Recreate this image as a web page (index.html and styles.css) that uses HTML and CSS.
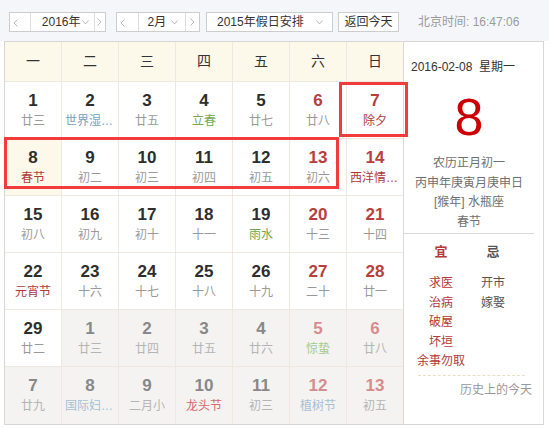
FILE: index.html
```html
<!DOCTYPE html>
<html lang="zh">
<head>
<meta charset="utf-8">
<title>万年历</title>
<link rel="stylesheet" href="styles.css">
</head>
<body>
<div class="topbar">
  <div class="sel year">
    <span class="arr l"><svg width="5" height="8" viewBox="0 0 5 8"><polyline points="4.5,0.5 1,4 4.5,7.5" fill="none" stroke="#b8b8b8" stroke-width="1"/></svg></span>
    <span class="mid">2016年<svg class="caret" width="7" height="5" viewBox="0 0 7 5"><polyline points="0.5,0.5 3.5,4 6.5,0.5" fill="none" stroke="#b8b8b8" stroke-width="1"/></svg></span>
    <span class="arr r"><svg width="5" height="8" viewBox="0 0 5 8"><polyline points="0.5,0.5 4,4 0.5,7.5" fill="none" stroke="#b8b8b8" stroke-width="1"/></svg></span>
  </div>
  <div class="sel month">
    <span class="arr l"><svg width="5" height="8" viewBox="0 0 5 8"><polyline points="4.5,0.5 1,4 4.5,7.5" fill="none" stroke="#b8b8b8" stroke-width="1"/></svg></span>
    <span class="mid">2月<svg class="caret" width="7" height="5" viewBox="0 0 7 5"><polyline points="0.5,0.5 3.5,4 6.5,0.5" fill="none" stroke="#b8b8b8" stroke-width="1"/></svg></span>
    <span class="arr r"><svg width="5" height="8" viewBox="0 0 5 8"><polyline points="0.5,0.5 4,4 0.5,7.5" fill="none" stroke="#b8b8b8" stroke-width="1"/></svg></span>
  </div>
  <div class="sel holiday">
    <span class="mid">2015年假日安排<svg class="caret" width="7" height="5" viewBox="0 0 7 5"><polyline points="0.5,0.5 3.5,4 6.5,0.5" fill="none" stroke="#b8b8b8" stroke-width="1"/></svg></span>
  </div>
  <div class="btn">返回今天</div>
  <div class="time">北京时间: 16:47:06</div>
</div>

<div class="cal">
  <div class="grid">
    <div class="wk">一</div><div class="wk">二</div><div class="wk">三</div><div class="wk">四</div><div class="wk">五</div><div class="wk">六</div><div class="wk">日</div>

    <div class="day"><span class="n">1</span><span class="l">廿三</span></div>
    <div class="day"><span class="n">2</span><span class="l blue">世界湿地日</span></div>
    <div class="day"><span class="n">3</span><span class="l">廿五</span></div>
    <div class="day"><span class="n">4</span><span class="l green">立春</span></div>
    <div class="day"><span class="n">5</span><span class="l">廿七</span></div>
    <div class="day"><span class="n red">6</span><span class="l">廿八</span></div>
    <div class="day"><span class="n red">7</span><span class="l red">除夕</span></div>

    <div class="day today"><span class="n">8</span><span class="l red">春节</span></div>
    <div class="day"><span class="n">9</span><span class="l">初二</span></div>
    <div class="day"><span class="n">10</span><span class="l">初三</span></div>
    <div class="day"><span class="n">11</span><span class="l">初四</span></div>
    <div class="day"><span class="n">12</span><span class="l">初五</span></div>
    <div class="day"><span class="n red">13</span><span class="l">初六</span></div>
    <div class="day"><span class="n red">14</span><span class="l red">西洋情人节</span></div>

    <div class="day"><span class="n">15</span><span class="l">初八</span></div>
    <div class="day"><span class="n">16</span><span class="l">初九</span></div>
    <div class="day"><span class="n">17</span><span class="l">初十</span></div>
    <div class="day"><span class="n">18</span><span class="l">十一</span></div>
    <div class="day"><span class="n">19</span><span class="l green">雨水</span></div>
    <div class="day"><span class="n red">20</span><span class="l">十三</span></div>
    <div class="day"><span class="n red">21</span><span class="l">十四</span></div>

    <div class="day"><span class="n">22</span><span class="l red">元宵节</span></div>
    <div class="day"><span class="n">23</span><span class="l">十六</span></div>
    <div class="day"><span class="n">24</span><span class="l">十七</span></div>
    <div class="day"><span class="n">25</span><span class="l">十八</span></div>
    <div class="day"><span class="n">26</span><span class="l">十九</span></div>
    <div class="day"><span class="n red">27</span><span class="l">二十</span></div>
    <div class="day"><span class="n red">28</span><span class="l">廿一</span></div>

    <div class="day"><span class="n">29</span><span class="l">廿二</span></div>
    <div class="day other"><span class="n">1</span><span class="l">廿三</span></div>
    <div class="day other"><span class="n">2</span><span class="l">廿四</span></div>
    <div class="day other"><span class="n">3</span><span class="l">廿五</span></div>
    <div class="day other"><span class="n">4</span><span class="l">廿六</span></div>
    <div class="day other"><span class="n red">5</span><span class="l green">惊蛰</span></div>
    <div class="day other"><span class="n red">6</span><span class="l">廿八</span></div>

    <div class="day other"><span class="n">7</span><span class="l">廿九</span></div>
    <div class="day other"><span class="n">8</span><span class="l blue">国际妇女节</span></div>
    <div class="day other"><span class="n">9</span><span class="l">二月小</span></div>
    <div class="day other"><span class="n">10</span><span class="l red">龙头节</span></div>
    <div class="day other"><span class="n">11</span><span class="l">初三</span></div>
    <div class="day other"><span class="n red">12</span><span class="l blue">植树节</span></div>
    <div class="day other"><span class="n red">13</span><span class="l">初五</span></div>
  </div>

  <div class="side">
    <div class="date">2016-02-08&nbsp; 星期一</div>
    <div class="big">8</div>
    <div class="info">
      <div>农历正月初一</div>
      <div>丙申年庚寅月庚申日</div>
      <div>[猴年] 水瓶座</div>
      <div>春节</div>
    </div>
    <div class="yiji">
      <div class="col yi">
        <div class="head">宜</div>
        <ul class="items">
          <li>求医</li><li>治病</li><li>破屋</li><li>坏垣</li><li>余事勿取</li>
        </ul>
      </div>
      <div class="col ji">
        <div class="head">忌</div>
        <ul class="items">
          <li>开市</li><li>嫁娶</li>
        </ul>
      </div>
    </div>
    <div class="dash"></div>
    <div class="history">历史上的今天</div>
  </div>
</div>

<div class="mark m1"></div>
<div class="mark m2"></div>
</body>
</html>
```

FILE: styles.css
```css
html, body {
  margin: 0;
  padding: 0;
}
body {
  width: 549px;
  height: 428px;
  overflow: hidden;
  position: relative;
  background: #fff;
  font-family: "Liberation Sans", "Noto Sans CJK SC", sans-serif;
  color: #333;
}

/* top bar */
.topbar {
  height: 41px;
  box-sizing: border-box;
  background: #f5f6fa;
  display: flex;
  align-items: flex-start;
  padding: 12px 0 0 9px;
  font-size: 12px;
}
.sel {
  display: flex;
  height: 20px;
  box-sizing: border-box;
  border: 1px solid #cdcdcd;
  background: #fff;
  margin-right: 10px;
}
.arr {
  display: flex;
  align-items: center;
  justify-content: center;
}
.mid {
  display: flex;
  align-items: center;
  justify-content: space-between;
  line-height: 18px;
}
.caret { display: block; }
.year { width: 97px; }
.year .arr.l { width: 15px; border-right: 1px solid #dcdcdc; }
.year .mid { width: 67px; box-sizing: border-box; padding: 0 5px 0 11px; }
.year .arr.r { width: 11px; border-left: 1px solid #dcdcdc; }
.month { width: 84px; }
.month .arr.l { width: 16px; border-right: 1px solid #dcdcdc; }
.month .mid { width: 50px; box-sizing: border-box; padding: 0 7px 0 9px; }
.month .arr.r { width: 14px; border-left: 1px solid #dcdcdc; }
.holiday { width: 127px; margin-left: -4px; margin-right: 5px; }
.holiday .mid { width: 100%; box-sizing: border-box; padding: 0 9px 0 10px; }
.btn {
  width: 61px;
  height: 20px;
  box-sizing: border-box;
  border: 1px solid #cdcdcd;
  background: #fff;
  text-align: center;
  line-height: 18px;
}
.time {
  margin-left: 19px;
  line-height: 20px;
  color: #9a9a9a;
}

/* calendar */
.cal {
  display: flex;
  margin-left: 4px;
  width: 540px;
  height: 384px;
  box-sizing: border-box;
  border: 1px solid #d6d6d6;
}
.grid {
  display: grid;
  grid-template-columns: repeat(6, 57px) 56px;
  grid-template-rows: 40px repeat(6, 57px);
  width: 398px;
}
.grid > div {
  box-sizing: border-box;
  border-right: 1px solid #eee8de;
  border-bottom: 1px solid #eee8de;
}
.grid > div:nth-child(7n) { border-right: none; }
.grid > div:nth-last-child(-n+7) { border-bottom: none; }
.wk {
  background: #fdf9ea;
  text-align: center;
  line-height: 39px;
  font-size: 14px;
  color: #333;
}
.day {
  text-align: center;
  padding-top: 9px;
  min-width: 0;
}
.day.today { background: #fdf9ea; }
.day.other { background: #f4f3f1; }
.n {
  display: block;
  font-weight: bold;
  font-size: 17px;
  line-height: 20px;
  color: #2e2e2e;
}
.l {
  display: block;
  font-size: 12px;
  line-height: 20px;
  color: #9a9a9a;
  white-space: nowrap;
  overflow: hidden;
  text-overflow: ellipsis;
  padding: 0 3px;
}
.n.red { color: #b5403d; }
.l.red { color: #b0393a; }
.l.blue { color: #7a9ec0; }
.l.green { color: #75a853; }
.other .n { color: #888; }
.other .n.red { color: #d68c8c; }
.other .l { color: #b4b4b4; }
.other .l.green { color: #a6c98c; }
.other .l.blue { color: #a7bfd6; }
.other .l.red { color: #d26a6a; }

/* side panel */
.side {
  flex: 1;
  border-left: 1px solid #d9d9d9;
  display: flex;
  flex-direction: column;
}
.date {
  margin: 17px 0 0 7px;
  font-size: 12px;
  line-height: 16px;
  color: #333;
}
.big {
  width: 130px;
  margin-top: 14px;
  text-align: center;
  font-size: 52px;
  line-height: 56px;
  color: #cc0000;
}
.info {
  width: 130px;
  margin-top: 9px;
  text-align: center;
  font-size: 12px;
  line-height: 19.5px;
  color: #707070;
}
.yiji {
  width: 130px;
  margin-top: 1px;
  border-top: 1px solid #d9d9d9;
  box-sizing: border-box;
  padding: 8px 0 0 11px;
  display: flex;
}
.col {
  width: 52px;
  text-align: center;
}
.head {
  font-size: 13px;
  font-weight: bold;
  line-height: 20px;
}
.yi .head { color: #b03a3a; }
.ji .head { color: #555; }
.items {
  list-style: none;
  margin: 12px 0 0;
  padding: 0;
  font-size: 12px;
  line-height: 19.5px;
}
.yi .items { color: #b03a3a; }
.ji .items { color: #555; }
.dash {
  margin: 3px 0 0 14px;
  width: 107px;
  border-top: 1px dashed #e8dfc4;
}
.history {
  padding: 4px 11px 0 0;
  text-align: right;
  font-size: 12px;
  line-height: 20px;
  color: #999;
}

/* red annotation boxes */
.mark {
  position: absolute;
  box-sizing: border-box;
  border: 3px solid #f23c3c;
}
.m1 { left: 339px; top: 82px; width: 69px; height: 55px; }
.m2 { left: 4px; top: 137px; width: 335px; height: 52px; }
```
